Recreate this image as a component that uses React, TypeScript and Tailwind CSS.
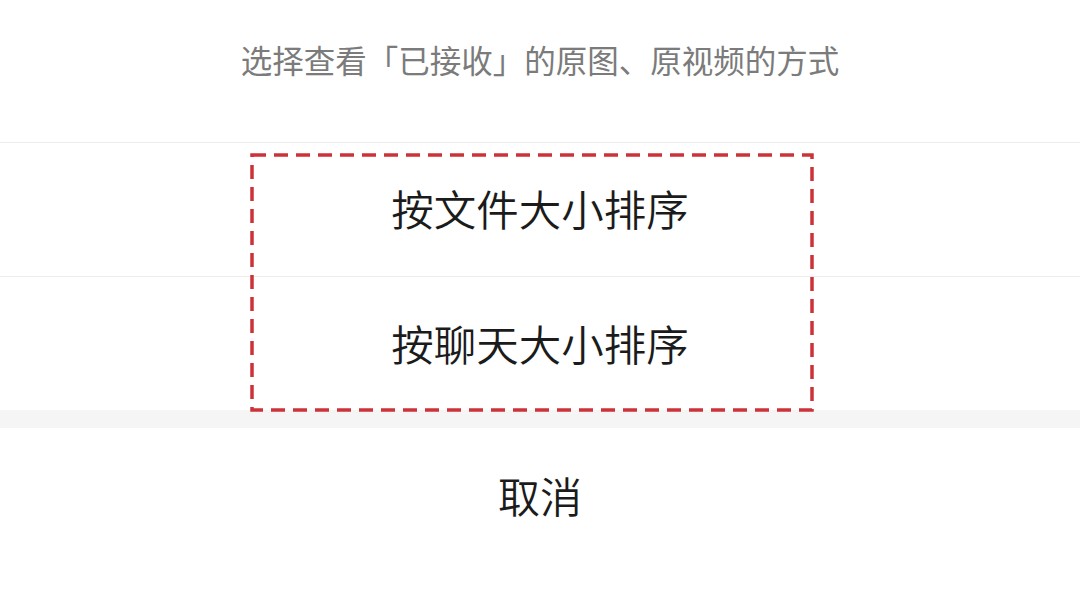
export default function App() {
  return (
    <div className="relative flex h-[613px] w-full flex-col overflow-hidden bg-white font-['Noto_Sans_CJK_SC','Noto_Sans',sans-serif]">
      {/* Sheet title */}
      <div className="flex h-[142px] items-center justify-center pb-[22px] text-[31.5px] text-[#7b7b7b]">
        选择查看「已接收」的原图、原视频的方式
      </div>

      {/* Options */}
      <div className="flex h-[134px] items-center justify-center border-t border-[#ececec] pb-[4px] text-[42.5px] font-[350] text-[#1b1b1b]">
        按文件大小排序
      </div>
      <div className="flex h-[134px] items-center justify-center border-t border-[#ececec] pb-[2px] text-[42.5px] font-[350] text-[#1b1b1b]">
        按聊天大小排序
      </div>

      <div className="h-[18px] bg-[#f5f5f5]" />

      <div className="flex h-[136px] items-center justify-center pb-[4px] text-[42px] font-[350] text-[#1b1b1b]">
        取消
      </div>

      {/* Annotation box */}
      <svg
        className="pointer-events-none absolute left-[250px] top-[153px]"
        width="564"
        height="259"
        viewBox="0 0 564 259"
      >
        <rect
          x="2"
          y="2"
          width="560"
          height="255"
          fill="none"
          stroke="#cd3238"
          strokeWidth="3.5"
          strokeDasharray="14 8"
        />
      </svg>
    </div>
  );
}
